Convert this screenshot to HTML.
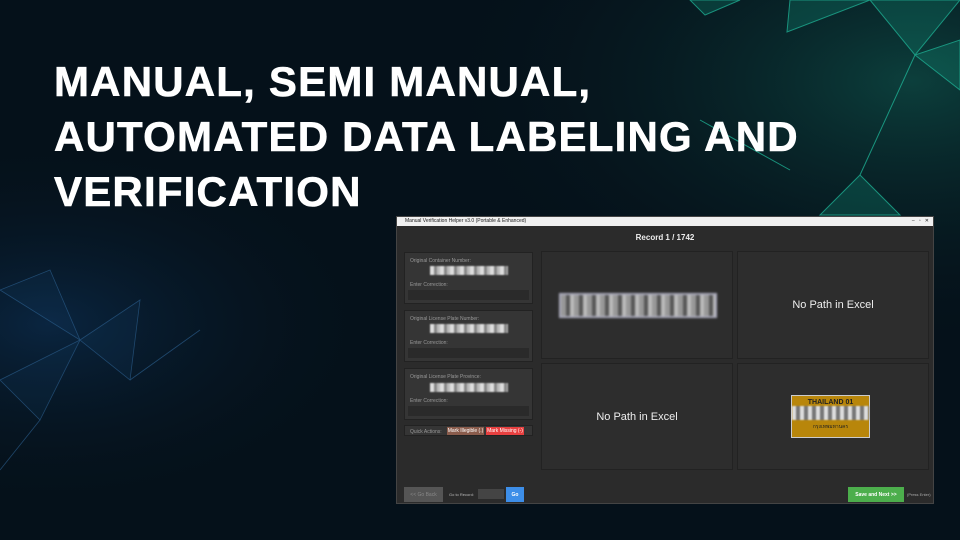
<!DOCTYPE html>
<html><head><style>
*{margin:0;padding:0;box-sizing:border-box}
body{width:960px;height:540px;overflow:hidden;background:#05111a;font-family:"Liberation Sans",sans-serif;position:relative}
.bg{position:absolute;inset:0}
h1{position:absolute;left:54px;top:54px;color:#fff;font-size:42px;line-height:55px;font-weight:bold;letter-spacing:1.2px;white-space:nowrap;-webkit-text-stroke:0.6px #fff}
.win{position:absolute;left:396px;top:216px;width:538px;height:288px;background:#2b2b2b;border:1px solid #444}
.tb{height:9px;background:#f0f0f0;font-size:5px;color:#222;padding-left:8px;line-height:9px}
.rec{position:absolute;top:16px;width:100%;text-align:center;color:#eee;font-size:8px;font-weight:bold}
.box{position:absolute;left:7px;width:129px;background:#353535;border:1px solid #222}
.lbl{position:absolute;left:5px;font-size:5px;color:#999}
.blur{position:absolute;left:25px;width:78px;height:9px;background:repeating-linear-gradient(90deg,#ddd 0 4px,#888 4px 7px,#bbb 7px 10px);filter:blur(.8px)}
.inp{position:absolute;left:3px;right:3px;height:10px;background:#2a2a2a}
.cell{position:absolute;background:#2d2d2d;border:1px solid #222}
.np{position:absolute;inset:0;display:flex;align-items:center;justify-content:center;color:#eee;font-size:11px}
.btn{position:absolute;font-size:5px;color:#fff;display:flex;align-items:center;justify-content:center}
</style></head><body>
<svg class="bg" width="960" height="540">
<defs><radialGradient id="g" cx="0.95" cy="0.15" r="0.5"><stop offset="0" stop-color="#0c3f3c"/><stop offset="1" stop-color="#05111a" stop-opacity="0"/></radialGradient>
<radialGradient id="g2" cx="0.05" cy="0.6" r="0.35"><stop offset="0" stop-color="#0a2540"/><stop offset="1" stop-color="#05111a" stop-opacity="0"/></radialGradient></defs>
<rect width="960" height="540" fill="url(#g)"/>
<rect width="960" height="540" fill="url(#g2)"/>
<g stroke="#1fb89a" stroke-width="1" fill="#14a88a" fill-opacity="0.3" opacity="0.75">
<polygon points="790,0 870,0 787,32"/>
<polygon points="870,0 915,55 960,0"/>
<polygon points="915,55 960,90 960,40"/>
<polygon points="860,175 900,215 820,215"/>
<line x1="915" y1="55" x2="860" y2="175"/><line x1="700" y1="120" x2="790" y2="170"/>
<polygon points="690,0 740,0 705,15"/>
</g>
<g stroke="#2a5c8a" stroke-width="0.8" fill="#1a4a7a" fill-opacity="0.2" opacity="0.7">
<polygon points="0,290 50,270 80,340"/><polygon points="80,340 140,300 130,380"/>
<polygon points="0,380 80,340 40,420"/><line x1="130" y1="380" x2="200" y2="330"/>
<line x1="40" y1="420" x2="0" y2="470"/>
</g>
</svg>
<h1>MANUAL, SEMI MANUAL,<br>AUTOMATED DATA LABELING AND<br>VERIFICATION</h1>
<div class="win">
<div class="tb">Manual Verification Helper v3.0 (Portable &amp; Enhanced)<span style="float:right;margin-right:4px">–&nbsp;&nbsp;&nbsp;▫&nbsp;&nbsp;&nbsp;✕</span></div>
<div class="rec">Record 1 / 1742</div>
<div class="box" style="top:35px;height:52px"><div class="lbl" style="top:5px">Original Container Number:</div><div class="blur" style="top:13px"></div><div class="lbl" style="top:29px">Enter Correction:</div><div class="inp" style="top:37px"></div></div>
<div class="box" style="top:93px;height:52px"><div class="lbl" style="top:5px">Original License Plate Number:</div><div class="blur" style="top:13px"></div><div class="lbl" style="top:29px">Enter Correction:</div><div class="inp" style="top:37px"></div></div>
<div class="box" style="top:151px;height:52px"><div class="lbl" style="top:5px">Original License Plate Province:</div><div class="blur" style="top:14px"></div><div class="lbl" style="top:29px">Enter Correction:</div><div class="inp" style="top:37px"></div></div>
<div class="box" style="top:208px;height:11px"><div class="lbl" style="top:3px">Quick Actions:</div>
<div class="btn" style="left:42px;top:1px;width:37px;height:8px;background:#8a5c4c">Mark Illegible (.)</div>
<div class="btn" style="left:81px;top:1px;width:38px;height:8px;background:#e84040">Mark Missing (-)</div></div>
<div class="cell" style="left:144px;top:34px;width:192px;height:108px"><div style="position:absolute;left:17px;top:41px;width:158px;height:25px;background:repeating-linear-gradient(90deg,#999 0 5px,#555 5px 9px,#bbb 9px 13px);border:2px solid #aab;filter:blur(1px)"></div></div>
<div class="cell" style="left:340px;top:34px;width:192px;height:108px"><div class="np">No Path in Excel</div></div>
<div class="cell" style="left:144px;top:146px;width:192px;height:107px"><div class="np">No Path in Excel</div></div>
<div class="cell" style="left:340px;top:146px;width:192px;height:107px"><div style="position:absolute;left:53px;top:31px;width:79px;height:43px;background:#b8860b;border:1px solid #ccc"><div style="font-size:7px;font-weight:bold;color:#222;text-align:center;margin-top:3px">THAILAND 01</div><div style="height:14px;background:repeating-linear-gradient(90deg,#ddd 0 4px,#777 4px 8px);filter:blur(.9px)"></div><div style="font-size:5px;color:#222;text-align:center;margin-top:3px">กรุงเทพมหานคร</div></div></div>
<div class="btn" style="left:7px;top:270px;width:39px;height:15px;background:#555;color:#888">&lt;&lt; Go Back</div>
<div class="lbl" style="left:52px;top:275px;color:#bbb;font-size:4px">Go to Record:</div>
<div style="position:absolute;left:81px;top:272px;width:26px;height:10px;background:#444"></div>
<div class="btn" style="left:109px;top:270px;width:18px;height:15px;background:#3d8ee8;font-weight:bold">Go</div>
<div class="btn" style="left:451px;top:270px;width:56px;height:15px;background:#4cae4c;font-weight:bold">Save and Next &gt;&gt;</div>
<div class="lbl" style="left:510px;top:275px;color:#aaa;font-size:4px">(Press Enter)</div>
</div>
</body></html>
